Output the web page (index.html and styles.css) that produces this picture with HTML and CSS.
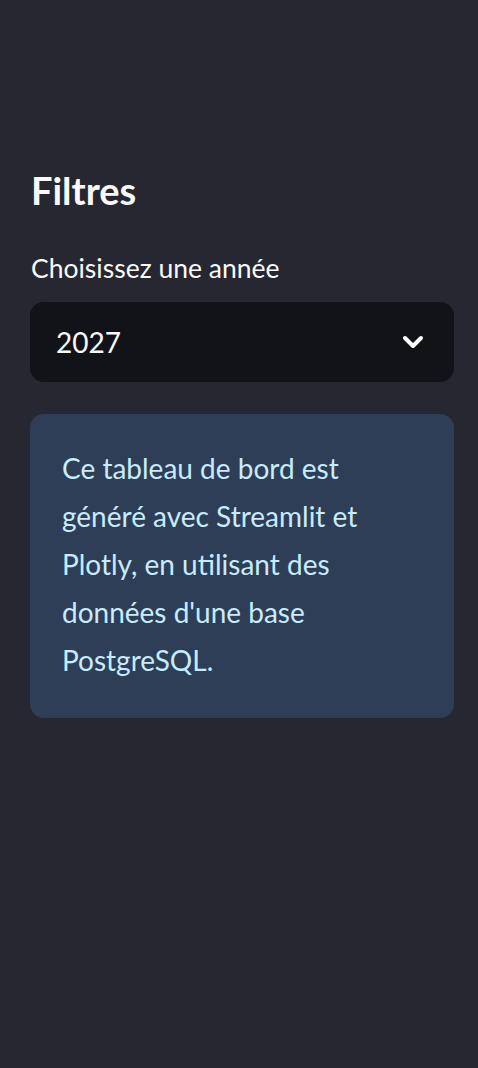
FILE: index.html
```html
<!DOCTYPE html>
<html lang="fr">
<head>
<meta charset="utf-8">
<link rel="stylesheet" href="styles.css">
</head>
<body>
<aside class="sidebar">
  <h2 class="title">Filtres</h2>
  <div class="field">
    <label class="label">Choisissez une année</label>
    <div class="select">
      <span class="value">2027</span>
      <svg class="chev" width="22" height="14" viewBox="0 0 22 14"><path d="M3 3 L11 11 L19 3" fill="none" stroke="#fff" stroke-width="4" stroke-linecap="round" stroke-linejoin="round"/></svg>
    </div>
  </div>
  <div class="info">
    <p>Ce tableau de bord est généré avec Streamlit et Plotly, en utilisant des données d'une base PostgreSQL.</p>
  </div>
</aside>
</body>
</html>
```
FILE: styles.css
```css
html, body {
  margin: 0;
  padding: 0;
  background: #262730;
  height: 100%;
}
body {
  font-family: Lato, "Noto Sans", sans-serif;
  color: #fafafa;
}
.sidebar {
  padding: 166px 24px 0 30px;
  display: flex;
  flex-direction: column;
}
.title {
  margin: 0 0 0 1px;
  font-size: 38px;
  font-weight: 700;
  line-height: 48px;
}
.field {
  margin-top: 38px;
  display: flex;
  flex-direction: column;
}
.label {
  font-size: 26.5px;
  line-height: 32px;
  margin-left: 1px;
}
.select {
  margin-top: 18px;
  height: 80px;
  background: #121318;
  border-radius: 14px;
  display: flex;
  align-items: center;
  justify-content: space-between;
  padding: 0 30px 0 26px;
}
.value {
  font-size: 28px;
}
.info {
  margin-top: 32px;
  background: #2e3e56;
  border-radius: 14px;
  padding: 30px 32px 34px 32px;
  min-height: 303px;
  box-sizing: border-box;
}
.info p {
  margin: 0;
  color: #c7ebff;
  font-size: 28px;
  line-height: 48px;
}
```
